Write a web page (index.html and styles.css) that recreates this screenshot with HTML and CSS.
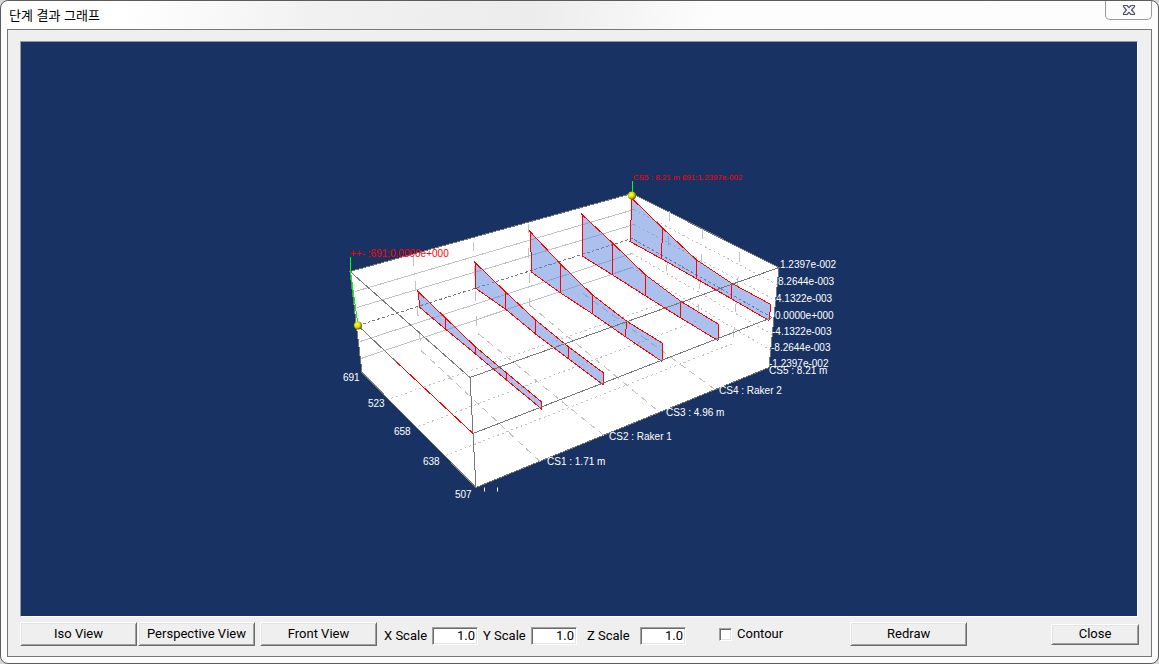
FILE: index.html
```html
<!DOCTYPE html>
<html lang="ko">
<head>
<meta charset="utf-8">
<title>단계 결과 그래프</title>
<link rel="stylesheet" href="styles.css">
</head>
<body>
<main class="window">
  <header class="titlebar">
    <h1 class="title">단계 결과 그래프</h1>
    <button class="window-close" type="button" aria-label="Close window">
      <svg width="14" height="12" viewBox="0 0 14 12" aria-hidden="true">
        <path d="M1.5 1.5H5L7 3.7L9 1.5H12.5V2.6L9.6 6L12.5 9.4V10.5H9L7 8.3L5 10.5H1.5V9.4L4.4 6L1.5 2.6Z" fill="#f4f4f8" stroke="#50506a" stroke-width="1.2" stroke-linejoin="round"/>
      </svg>
    </button>
  </header>
  <section class="panel">
    <div class="view">
      <svg class="plot" viewBox="21 42 1116 573" role="img" aria-label="Stage result graph">
        <defs>
          <radialGradient id="ball" cx="0.4" cy="0.4" r="0.65">
            <stop offset="0" stop-color="#ffff30"/>
            <stop offset="0.5" stop-color="#dede00"/>
            <stop offset="1" stop-color="#4c4c00"/>
          </radialGradient>
        </defs>
        <g shape-rendering="crispEdges">
          <path class="box" d="M350 271L632 193L779 267L769 367L476 487L362 372Z"/>
          <g class="grid">
            <path d="M355 291L634 209M357 307L634 224M360 341L632 253M361 358L632 267"/>
            <path class="dotted" d="M634 209L777 284M634 224L776 300M632 253L772 334M632 267L771 350"/>
            <path class="dotted" d="M391 398L665 302M418 426L698 320M446 455L733 343"/>
            <path class="dashed" d="M413 256L421 350M473 241L477 332M528 223L530 305"/>
            <path class="dashed" d="M670 211L666 283M703 229L698 320M740 252L733 343"/>
            <path class="broken" d="M421 350L540 461M478 333L604 435M530 305L660 412M583 293L715 389"/>
          </g>
          <path class="zero-back" d="M358 325L632 238L772 317"/>
          <g class="curtains">
            <path d="M632 198L663 228L696 259L732 283L771 304L769 320L731 298L696 278L661 258L630 241Z"/>
            <path d="M582 214L613 243L645 274L681 301L719 324L718 340L680 317L645 295L612 274L583 256Z"/>
            <path d="M530 231L560 263L592 294L627 321L663 343L662 361L625 336L592 313L560 292L532 272Z"/>
            <path d="M475 262L505 291L535 319L568 346L603 372V384L568 358L535 333L506 309L476 288Z"/>
            <path d="M418 291L445 317L475 346L506 372L541 401V408L506 379L475 353L446 329L420 307Z"/>
          </g>
          <g class="ribs">
            <path d="M663 228L661 258M696 259V278M732 283L731 298"/>
            <path d="M613 243L612 274M645 274V295M681 301L680 317"/>
            <path d="M560 263V292M592 294V313M627 321L625 336"/>
            <path d="M505 291L506 309M535 319V333M568 346V358"/>
            <path d="M445 317L446 329M475 346V353M506 372V379"/>
          </g>
          <path class="edge" d="M350 271L470 377L779 267M470 377L473 433L476 487M473 433L772 317M358 325L397 362"/>
          <path class="red-line" d="M397 362L473 433"/>
          <path class="marker-line" d="M350.5 256V271L358 325M632.5 180V194"/>
        </g>
        <circle cx="358" cy="325" r="4" fill="url(#ball)"/>
        <circle cx="632" cy="195" r="4" fill="url(#ball)"/>
        <g class="values">
          <text x="350" y="256">++- :691:0.0000e+000</text>
          <text class="small" x="633" y="179">CS5 : 8.21 m 691:1.2397e-002</text>
        </g>
        <g class="labels">
          <text x="343" y="380">691</text>
          <text x="368" y="406">523</text>
          <text x="394" y="434">658</text>
          <text x="423" y="464">638</text>
          <text x="455" y="497">507</text>
          <path d="M484.5 487V491M497.5 487V491" stroke="#fff"/>
          <text x="547" y="464">CS1 : 1.71 m</text>
          <text x="609" y="439">CS2 : Raker 1</text>
          <text x="666" y="415">CS3 : 4.96 m</text>
          <text x="719" y="393">CS4 : Raker 2</text>
          <text x="769" y="373">CS5 : 8.21 m</text>
          <text x="780" y="267">1.2397e-002</text>
          <text x="778" y="284">8.2644e-003</text>
          <text x="776" y="301">4.1322e-003</text>
          <text x="775" y="318">0.0000e+000</text>
          <text x="772" y="334">-4.1322e-003</text>
          <text x="771" y="350">-8.2644e-003</text>
          <text x="769" y="366">-1.2397e-002</text>
        </g>
      </svg>
    </div>
    <form class="toolbar">
      <button class="btn" type="button">Iso View</button>
      <button class="btn" type="button">Perspective View</button>
      <button class="btn btn-front" type="button">Front View</button>
      <div class="scales">
        <div class="field"><label for="x-scale">X Scale</label><input id="x-scale" type="text" value="1.0"></div>
        <div class="field"><label for="y-scale">Y Scale</label><input id="y-scale" type="text" value="1.0"></div>
        <div class="field field-z"><label for="z-scale">Z Scale</label><input id="z-scale" type="text" value="1.0"></div>
      </div>
      <div class="check"><input id="contour" type="checkbox"><label for="contour">Contour</label></div>
      <button class="btn btn-redraw" type="button">Redraw</button>
      <button class="btn btn-close" type="button">Close</button>
    </form>
  </section>
</main>
</body>
</html>
```
FILE: styles.css
```css
* {
  box-sizing: border-box;
}

body {
  margin: 0;
  background: #d8d8d8;
  color: #000;
  font: 13px/16px Roboto, "Noto Sans CJK KR", sans-serif;
}

.window {
  display: flex;
  flex-direction: column;
  min-height: 100vh;
  padding: 0 6px 6px;
  border: 1px solid #5c5c5c;
  border-radius: 8px;
  background: #fcfcfc;
}

.titlebar {
  display: flex;
  justify-content: space-between;
  height: 28px;
  background: linear-gradient(100deg, #fff 10%, #f1f1f1 27%, #ececec 46%, #fdfdfd 62%, #fcfcfc);
}

.title {
  margin: 0;
  padding: 5px 0 0 2px;
  font: 13px/18px "Noto Sans CJK KR", sans-serif;
}

.window-close {
  display: flex;
  align-items: center;
  justify-content: center;
  width: 47px;
  height: 19px;
  padding: 0;
  border: 1px solid #9a9a9a;
  border-top: 0;
  border-radius: 0 0 5px 5px;
  background: #fdfdfd;
}

.panel {
  display: flex;
  flex: 1;
  flex-direction: column;
  padding: 11px 12px 10px;
  border: 1px solid #777;
  background: #efefef;
}

.view {
  display: flex;
  flex: 1;
  margin-right: 1px;
  border: 1px solid;
  border-color: #999 #fff #fff #999;
  background: #193264;
}

.plot {
  flex: 1;
  width: 100%;
  min-width: 0;
}

.box {
  fill: #fff;
  stroke: #777;
}

.grid {
  fill: none;
  stroke: #c2c2c2;
}

.dotted {
  stroke-dasharray: 2 3;
}

.dashed {
  stroke-dasharray: 10 15;
}

.broken {
  stroke-dasharray: 7 5;
}

.zero-back {
  fill: none;
  stroke: #777;
  stroke-dasharray: 3 2;
}

.curtains {
  fill: rgb(90 130 220 / 50%);
  stroke: #f00;
}

.ribs {
  fill: none;
  stroke: #f00;
}

.edge {
  fill: none;
  stroke: #777;
}

.red-line {
  stroke: #f00;
}

.marker-line {
  fill: none;
  stroke: #0f0;
}

.values {
  fill: #f00;
  font: 10px "Liberation Sans", sans-serif;
}

.values .small {
  font-size: 8px;
}

.labels {
  fill: #fff;
  font: 10px "Liberation Sans", sans-serif;
}

.toolbar {
  display: flex;
  align-items: center;
  padding-top: 5px;
}

.btn {
  width: 117px;
  height: 24px;
  margin-right: 1px;
  padding: 0 0 1px;
  border: 1px solid;
  border-color: #fff #6b6b6b #6b6b6b #fff;
  background: #efefef;
  box-shadow: inset 1px 1px #e3e3e3, inset -1px -1px #a0a0a0;
  color: #000;
  font: inherit;
}

.btn-front {
  margin-left: 4px;
}

.scales {
  display: flex;
  gap: 5px;
  padding: 3px 0 0 6px;
}

.field {
  display: flex;
  align-items: center;
  justify-content: space-between;
  width: 94px;
}

.field-z {
  width: 99px;
  margin-left: 5px;
}

.field input {
  width: 46px;
  height: 18px;
  padding: 0 2px 0 0;
  border: 1px solid;
  border-color: #a0a0a0 #fff #fff #a0a0a0;
  background: #fff;
  box-shadow: inset 1px 1px #6b6b6b, inset -1px -1px #e3e3e3;
  color: #000;
  font: inherit;
  text-align: right;
}

.check {
  display: flex;
  align-items: center;
  gap: 5px;
  margin-left: 33px;
}

.check input {
  width: 13px;
  height: 13px;
  margin: 0;
  border: 1px solid;
  border-color: #a0a0a0 #fff #fff #a0a0a0;
  background: #fff;
  box-shadow: inset 1px 1px #6b6b6b, inset -1px -1px #e3e3e3;
  appearance: none;
}

.check input:checked {
  background: #000;
  box-shadow: inset 0 0 0 2px #fff;
}

.btn-redraw {
  margin-left: 67px;
}

.btn-close {
  width: 88px;
  height: 21px;
  margin-right: 0;
  margin-left: auto;
}
```
